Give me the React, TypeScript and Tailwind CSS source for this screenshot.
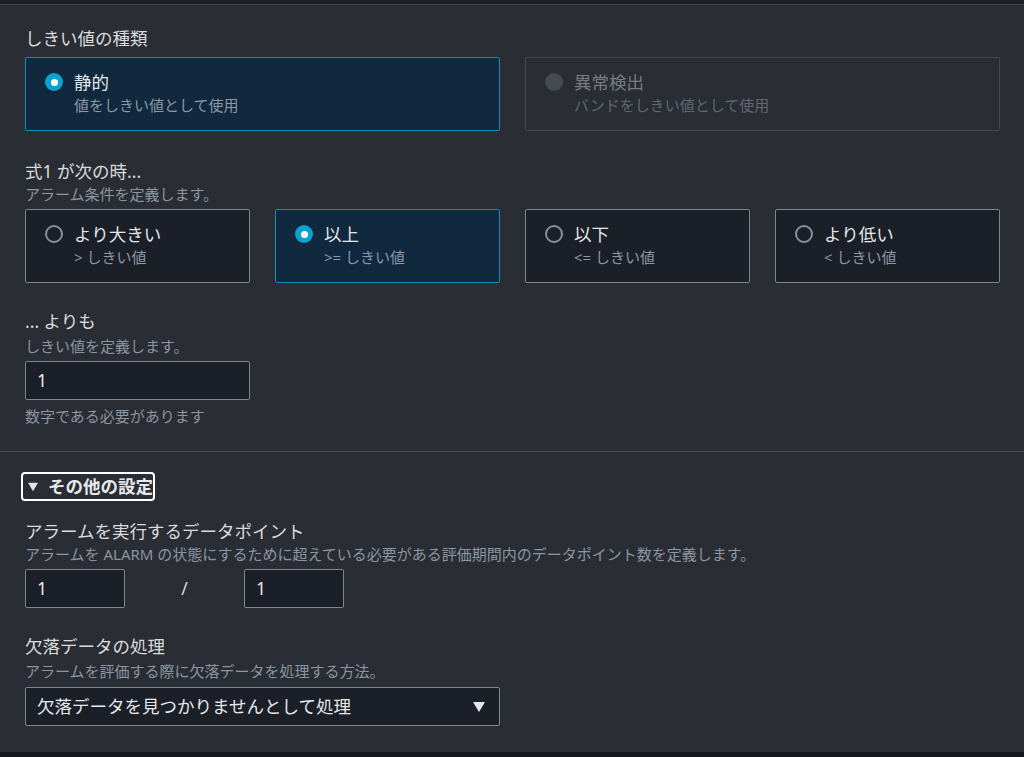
import React from 'react';

const font = { fontFamily: '"Noto Sans", "Noto Sans CJK JP", sans-serif' };

type Option = { label: string; desc: string; selected?: boolean; disabled?: boolean };

const Radio: React.FC<{ selected?: boolean; disabled?: boolean }> = ({ selected, disabled }) => {
  if (selected) {
    return (
      <span className="flex h-[18px] w-[18px] flex-shrink-0 items-center justify-center rounded-full bg-[#0aa3cf]">
        <span className="h-[7px] w-[7px] rounded-full bg-white" />
      </span>
    );
  }
  if (disabled) {
    return <span className="h-[18px] w-[18px] flex-shrink-0 rounded-full bg-[#454a53]" />;
  }
  return <span className="h-[18px] w-[18px] flex-shrink-0 rounded-full border-2 border-[#8a9097]" />;
};

const OptionCard: React.FC<Option> = ({ label, desc, selected, disabled }) => (
  <div
    className={`flex h-[74px] gap-[11px] rounded-[2px] border pl-[19px] pt-[12px] ${
      selected
        ? 'border-[#0b8fb6] bg-[#10293e]'
        : disabled
        ? 'border-[#42474e] bg-transparent'
        : 'border-[#7f868e] bg-[#1a1f28]'
    }`}
  >
    <div className="flex h-[24px] items-center">
      <Radio selected={selected} disabled={disabled} />
    </div>
    <div className="flex flex-col">
      <span
        className={`text-[17.5px] leading-[24px] ${
          disabled ? 'text-[#767c85]' : 'text-[#e4e7ea]'
        }`}
      >
        {label}
      </span>
      <span
        className={`text-[15px] leading-[22px] ${
          disabled ? 'text-[#5f6873]' : 'text-[#8d98a5]'
        }`}
      >
        {desc}
      </span>
    </div>
  </div>
);

const Heading: React.FC<{ children: React.ReactNode }> = ({ children }) => (
  <div className="text-[17.5px] leading-[24px] text-[#d8dcdf]">{children}</div>
);

const Sub: React.FC<{ children: React.ReactNode; className?: string }> = ({ children, className = '' }) => (
  <div className={`text-[15px] leading-[22px] text-[#8b96a3] ${className}`}>{children}</div>
);

const TextBox: React.FC<{ value: string; className: string }> = ({ value, className }) => (
  <div
    className={`flex h-[39px] items-center rounded-[2px] border border-[#7f868e] bg-[#1a1f28] pl-[11px] text-[17.5px] text-[#e6e8ea] ${className}`}
  >
    {value}
  </div>
);

const Caret: React.FC<{ className?: string }> = ({ className }) => (
  <svg viewBox="0 0 12 10" className={className}>
    <polygon points="0,0 12,0 6,10" fill="currentColor" />
  </svg>
);

export default function App() {
  const comparisons: Option[] = [
    { label: 'より大きい', desc: '> しきい値' },
    { label: '以上', desc: '>= しきい値', selected: true },
    { label: '以下', desc: '<= しきい値' },
    { label: 'より低い', desc: '< しきい値' },
  ];

  return (
    <div className="h-[757px] w-full overflow-hidden bg-[#2a2d33]" style={font}>
      <div className="h-[5px] border-b border-[#41464d] bg-[#1d2026]" />

      <div className="pl-[25px] pr-[24px] pt-[21px]">
        {/* threshold type */}
        <Heading>しきい値の種類</Heading>
        <div className="mt-[7px] grid grid-cols-2 gap-[25px]">
          <OptionCard label="静的" desc="値をしきい値として使用" selected />
          <OptionCard label="異常検出" desc="バンドをしきい値として使用" disabled />
        </div>

        {/* condition */}
        <div className="mt-[28px]">
          <Heading>式1 が次の時...</Heading>
          <Sub>アラーム条件を定義します。</Sub>
        </div>
        <div className="mt-[4px] grid grid-cols-4 gap-[25px]">
          {comparisons.map((c) => (
            <OptionCard key={c.label} {...c} />
          ))}
        </div>

        {/* threshold value */}
        <div className="mt-[26px]">
          <Heading>... よりも</Heading>
          <Sub className="mt-[2px]">しきい値を定義します。</Sub>
        </div>
        <TextBox value="1" className="mt-[4px] w-[225px]" />
        <Sub className="mt-[5px]">数字である必要があります</Sub>
      </div>

      <div className="mt-[24px] border-t border-[#464b52]" />

      <div className="pl-[25px] pr-[24px]">
        <div className="-ml-[4px] mt-[20px] flex h-[29px] w-[134px] items-center overflow-hidden rounded-[4px] border-2 border-white pl-[5px]">
          <Caret className="h-[10px] w-[12px] text-[#dfe3e6]" />
          <span className="ml-[10px] whitespace-nowrap text-[17.5px] font-bold text-[#e6e9ec]">その他の設定</span>
        </div>

        <div className="mt-[18px]">
          <Heading>アラームを実行するデータポイント</Heading>
          <Sub>アラームを ALARM の状態にするために超えている必要がある評価期間内のデータポイント数を定義します。</Sub>
        </div>
        <div className="mt-[4px] flex items-center">
          <TextBox value="1" className="w-[100px]" />
          <span className="w-[119px] text-center text-[17.5px] text-[#d8dcdf]">/</span>
          <TextBox value="1" className="w-[100px]" />
        </div>

        <div className="mt-[26px]">
          <Heading>欠落データの処理</Heading>
          <Sub className="mt-[2px]">アラームを評価する際に欠落データを処理する方法。</Sub>
        </div>
        <div className="mt-[5px] flex h-[39px] w-[475px] items-center justify-between rounded-[2px] border border-[#7f868e] bg-[#1a1f28] pl-[11px] pr-[14px] text-[17.5px] text-[#e6e8ea]">
          <span>欠落データを見つかりませんとして処理</span>
          <Caret className="h-[10px] w-[12px] text-[#e6e8ea]" />
        </div>
      </div>
      <div className="mt-[26px] h-[5px] bg-[#16181d]" />
    </div>
  );
}
